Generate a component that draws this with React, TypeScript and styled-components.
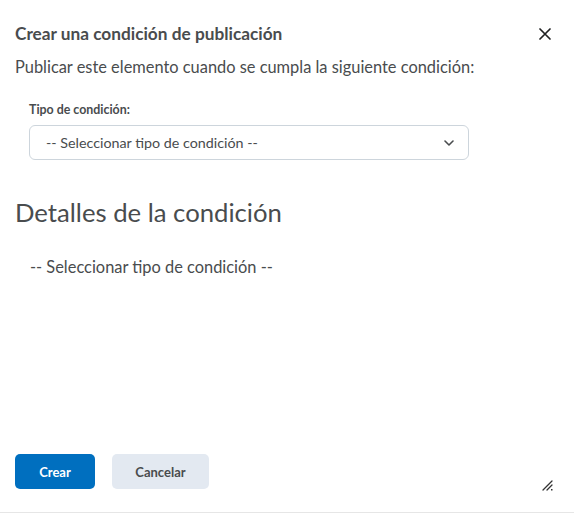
import React from "react";
import styled, { createGlobalStyle } from "styled-components";

const GlobalStyle = createGlobalStyle`
  html, body {
    margin: 0;
    padding: 0;
    background: #ffffff;
  }
  body {
    font-family: Lato, "Noto Sans", sans-serif;
    color: #494c4e;
  }
`;

const Dialog = styled.div`
  width: 574px;
  height: 513px;
  box-sizing: border-box;
  border-bottom: 1px solid #e6e6e6;
  display: flex;
  flex-direction: column;
  position: relative;
`;

const Header = styled.div`
  display: flex;
  justify-content: space-between;
  align-items: center;
  padding: 23px 22px 0 15px;
  height: 21px;
`;

const Title = styled.h2`
  margin: 0;
  font-size: 17.25px;
  font-weight: 700;
  line-height: 21px;
  color: #494c4e;
`;

const CloseButton = styled.button`
  border: 0;
  background: transparent;
  padding: 0;
  width: 14px;
  height: 14px;
  display: flex;
  align-items: center;
  justify-content: center;
  cursor: pointer;
`;

const Body = styled.div`
  flex: 1;
  padding: 0 15px;
  display: flex;
  flex-direction: column;
`;

const Intro = styled.p`
  margin: 12px 0 0;
  font-size: 16.4px;
  line-height: 22px;
  color: #494c4e;
`;

const Field = styled.div`
  padding: 24px 0 0 14px;
  display: flex;
  flex-direction: column;
  gap: 7px;
`;

const Label = styled.label`
  font-size: 12.4px;
  font-weight: 700;
  line-height: 16px;
  color: #494c4e;
`;

const SelectBox = styled.div`
  width: 440px;
  height: 35px;
  box-sizing: border-box;
  border: 1px solid #cdd5dc;
  border-radius: 6px;
  display: flex;
  align-items: center;
  justify-content: space-between;
  padding: 0 14px 0 16px;
  font-size: 14.3px;
  color: #494c4e;
  background: #fff;
`;

const SectionTitle = styled.h3`
  margin: 37px 0 0;
  font-size: 25.7px;
  font-weight: 400;
  line-height: 30px;
  color: #494c4e;
`;

const Placeholder = styled.p`
  margin: 29px 0 0 15px;
  font-size: 16.4px;
  line-height: 22px;
  color: #494c4e;
`;

const Footer = styled.div`
  display: flex;
  align-items: center;
  gap: 17px;
  padding: 0 15px 23px;
`;

const Button = styled.button<{ $primary?: boolean }>`
  height: 35px;
  border: 0;
  border-radius: 5px;
  font-family: Lato, "Noto Sans", sans-serif;
  font-size: 13px;
  font-weight: 700;
  padding: 0;
  width: ${(p) => (p.$primary ? "80px" : "97px")};
  background: ${(p) => (p.$primary ? "#006fbf" : "#e3e9f1")};
  color: ${(p) => (p.$primary ? "#ffffff" : "#494c4e")};
  cursor: pointer;
`;

const ResizeHandle = styled.div`
  position: absolute;
  right: 21px;
  bottom: 26px;
  width: 11px;
  height: 11px;
`;

export default function App() {
  return (
    <>
      <GlobalStyle />
      <Dialog>
        <Header>
          <Title>Crear una condición de publicación</Title>
          <CloseButton aria-label="Cerrar">
            <svg width="12" height="12" viewBox="0 0 12 12">
              <path d="M1 1 L11 11 M11 1 L1 11" stroke="#202122" strokeWidth="1.7" strokeLinecap="round" />
            </svg>
          </CloseButton>
        </Header>
        <Body>
          <Intro>Publicar este elemento cuando se cumpla la siguiente condición:</Intro>
          <Field>
            <Label>Tipo de condición:</Label>
            <SelectBox>
              <span>-- Seleccionar tipo de condición --</span>
              <svg width="10" height="6" viewBox="0 0 10 6">
                <path d="M1 1 L5 5 L9 1" fill="none" stroke="#494c4e" strokeWidth="1.6" strokeLinecap="round" strokeLinejoin="round" />
              </svg>
            </SelectBox>
          </Field>
          <SectionTitle>Detalles de la condición</SectionTitle>
          <Placeholder>-- Seleccionar tipo de condición --</Placeholder>
        </Body>
        <Footer>
          <Button $primary>Crear</Button>
          <Button>Cancelar</Button>
        </Footer>
        <ResizeHandle>
          <svg width="11" height="11" viewBox="0 0 11 11">
            <path d="M1 10 L10 1 M5 10 L10 5" stroke="#333" strokeWidth="1.3" strokeLinecap="round" />
            <rect x="9" y="9" width="1.5" height="1.5" fill="#333" />
          </svg>
        </ResizeHandle>
      </Dialog>
    </>
  );
}
